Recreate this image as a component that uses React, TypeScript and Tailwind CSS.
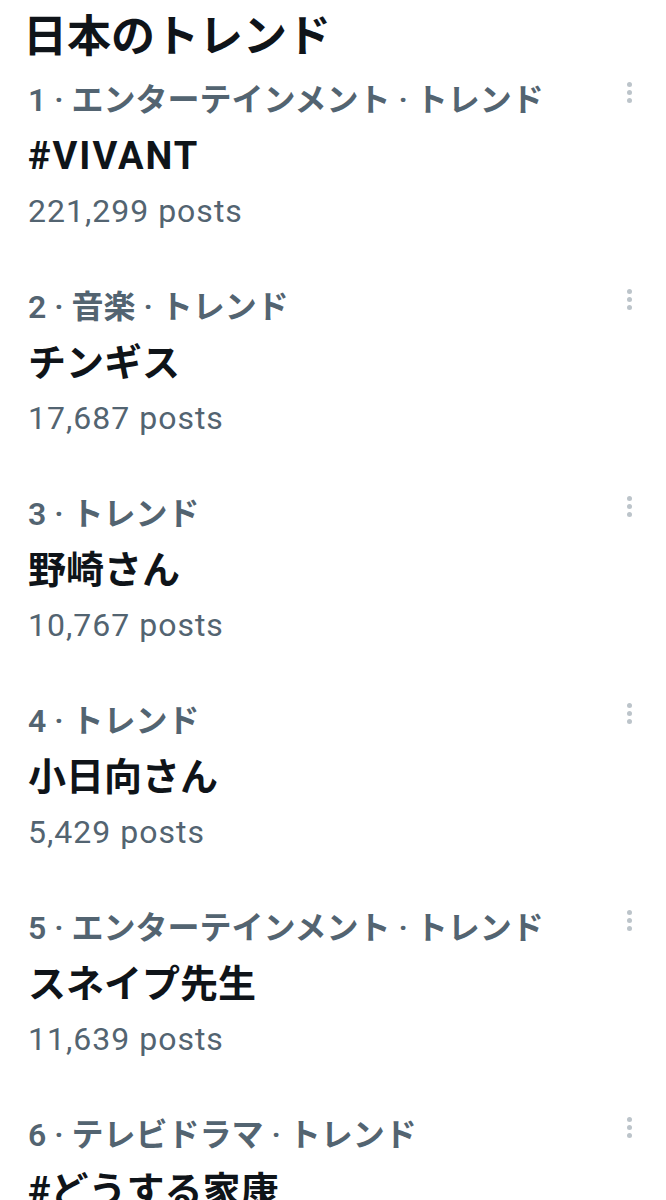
const TRENDS = [
  { category: "1 · エンターテインメント · トレンド", title: "#VIVANT", posts: "221,299 posts", latin: true },
  { category: "2 · 音楽 · トレンド", title: "チンギス", posts: "17,687 posts" },
  { category: "3 · トレンド", title: "野崎さん", posts: "10,767 posts" },
  { category: "4 · トレンド", title: "小日向さん", posts: "5,429 posts" },
  { category: "5 · エンターテインメント · トレンド", title: "スネイプ先生", posts: "11,639 posts" },
  { category: "6 · テレビドラマ · トレンド", title: "#どうする家康", posts: "" },
];

const FONT = "font-['Roboto','Noto_Sans_CJK_JP',sans-serif]";

function MoreDots() {
  return (
    <div className="absolute right-[34px] top-[5px] flex flex-col gap-[3px]">
      <span className="block w-[5px] h-[5px] rounded-full bg-[#bcc4ca]" />
      <span className="block w-[5px] h-[5px] rounded-full bg-[#bcc4ca]" />
      <span className="block w-[5px] h-[5px] rounded-full bg-[#bcc4ca]" />
    </div>
  );
}

export default function App() {
  return (
    <div className={`w-[666px] h-[1200px] overflow-hidden bg-white ${FONT}`}>
      <div className="h-[77px] pl-[23px] leading-[74px] text-[44px] font-bold text-[#0f1419]">
        日本のトレンド
      </div>
      {TRENDS.map((t) => (
        <div key={t.category} className="relative pl-[28px] pb-[51px]">
          <div className="h-[46px] leading-[46px] text-[32px] font-semibold text-[#536471] whitespace-nowrap">
            {t.category}
          </div>
          <div
            className={`h-[66px] leading-[66px] text-[38px] font-bold text-[#0f1419] whitespace-nowrap ${
              t.latin ? "tracking-[2px]" : ""
            }`}
          >
            {t.title}
          </div>
          <div className="h-[44px] leading-[44px] text-[32px] tracking-[1px] text-[#536471] whitespace-nowrap">
            {t.posts}
          </div>
          <MoreDots />
        </div>
      ))}
    </div>
  );
}
